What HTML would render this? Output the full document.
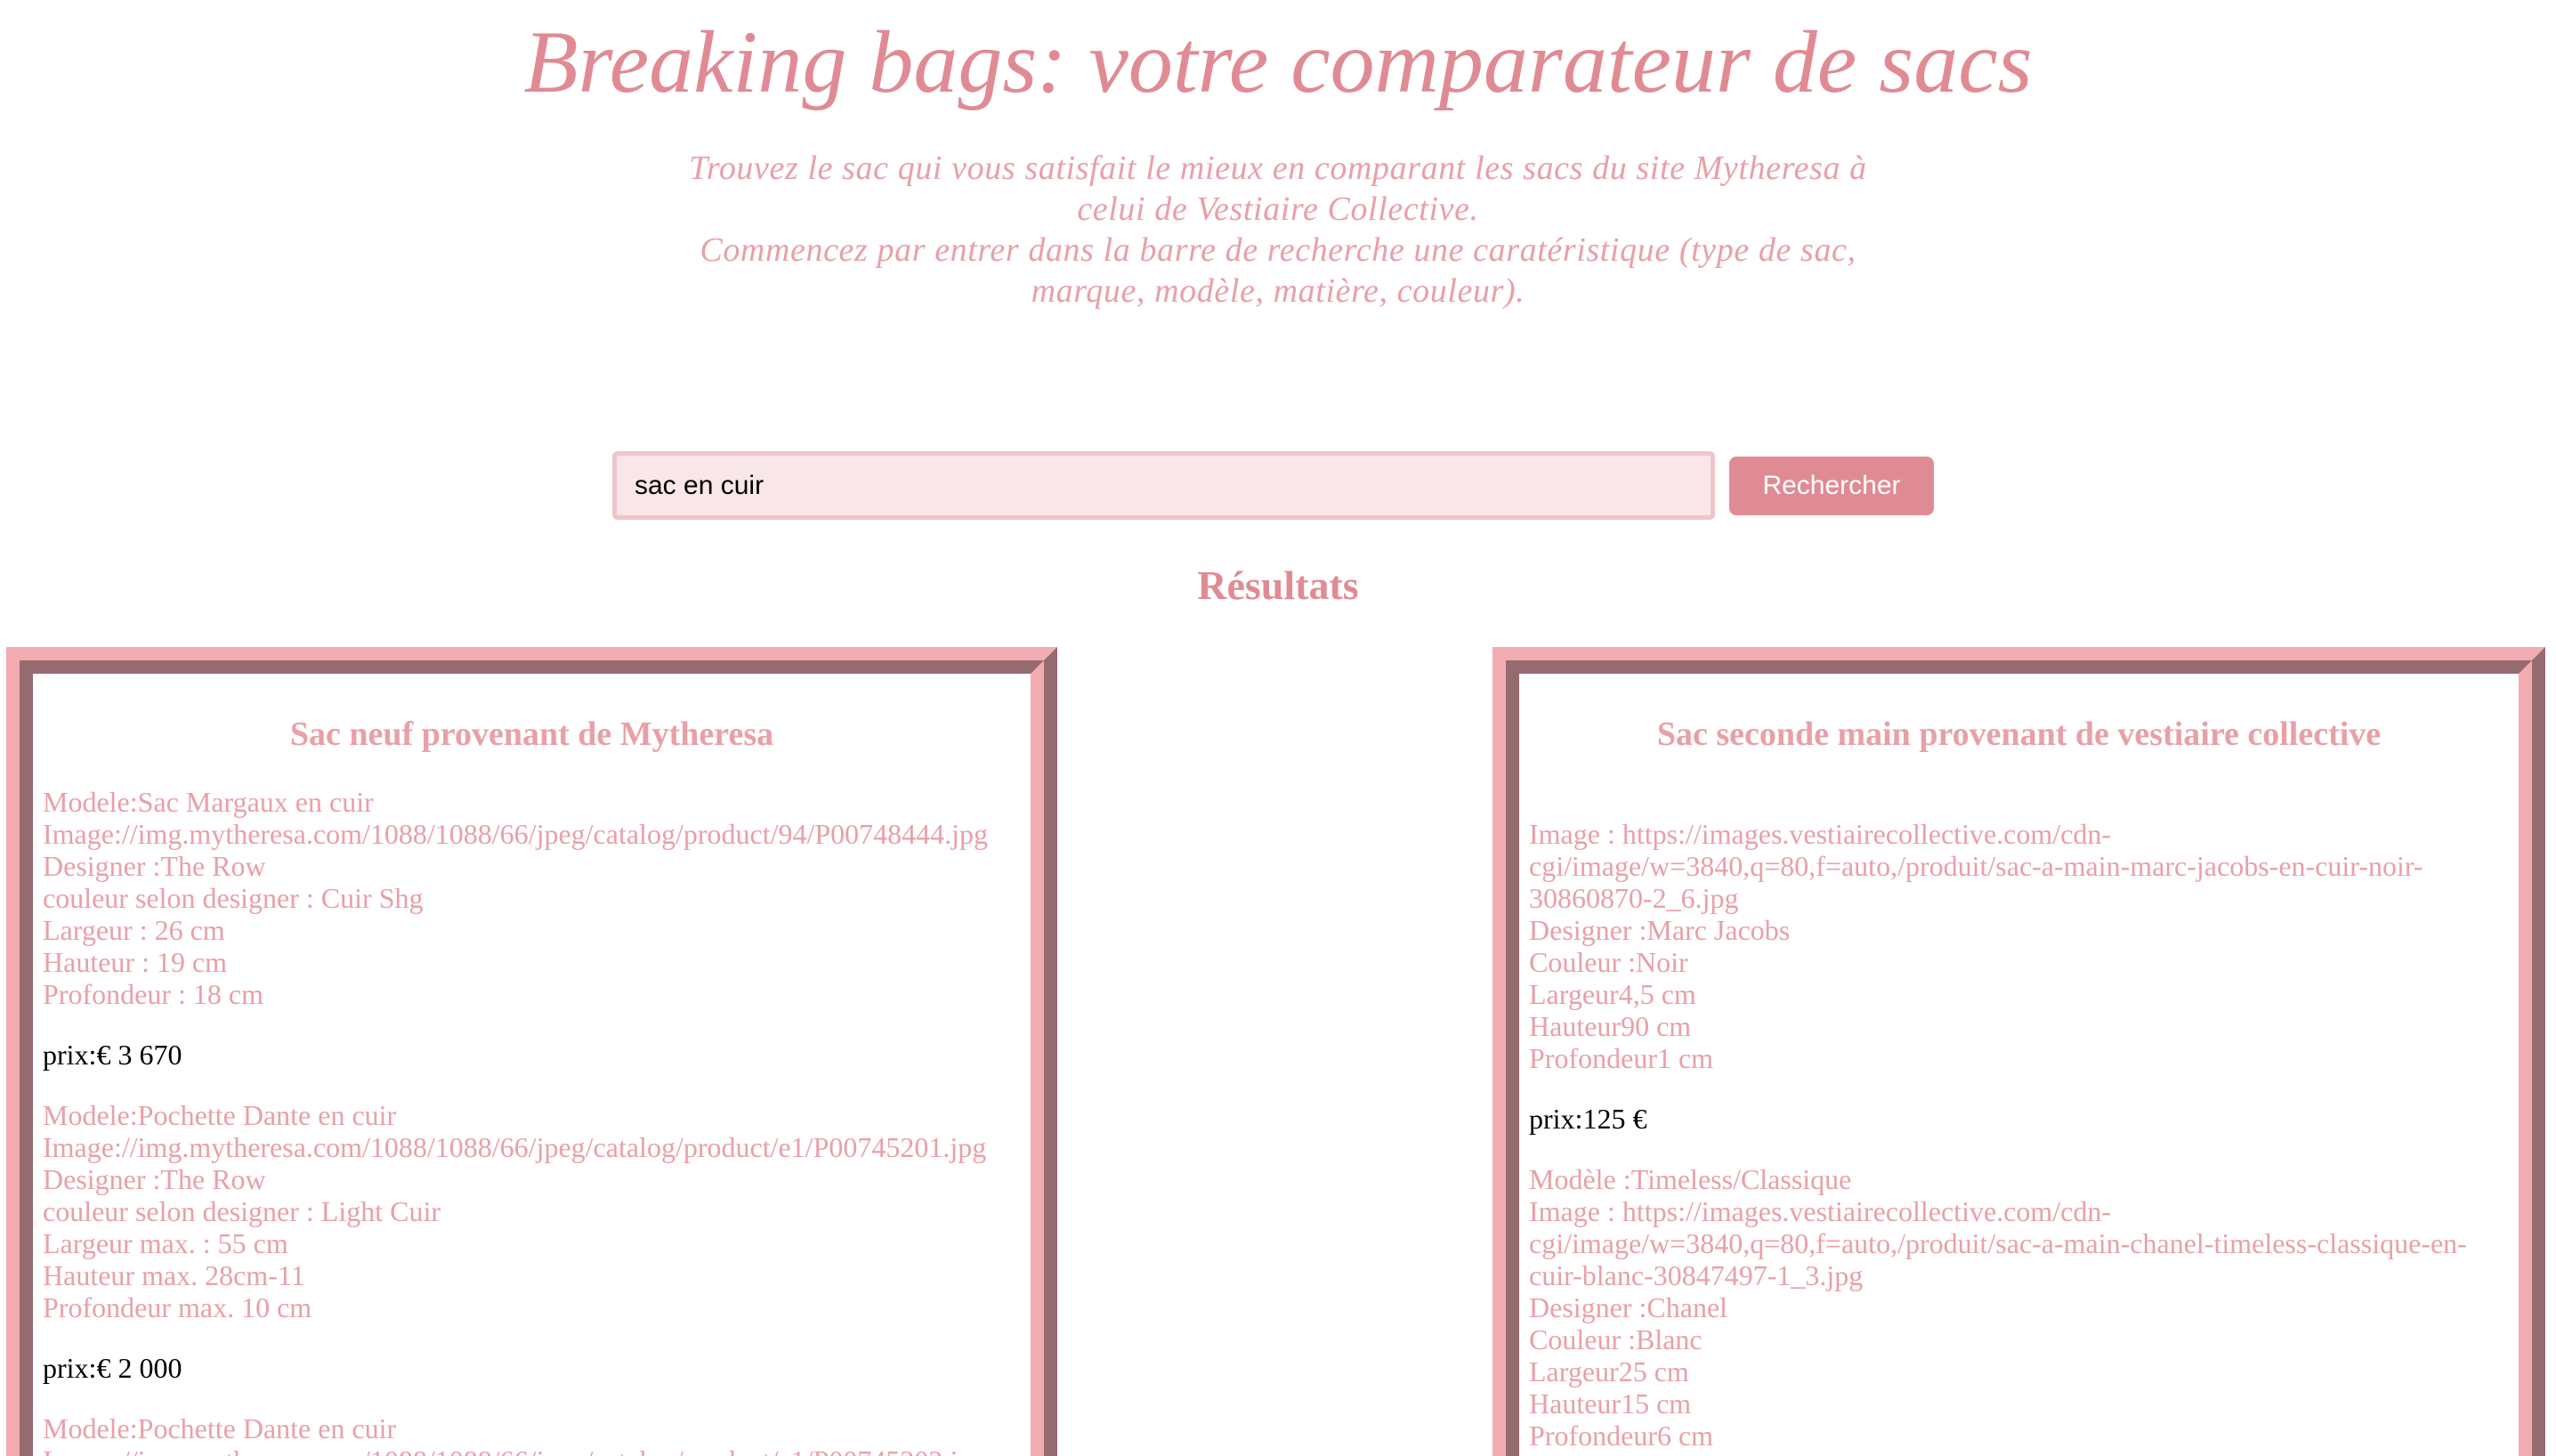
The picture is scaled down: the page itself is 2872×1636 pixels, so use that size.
<!DOCTYPE html>
<html><head><meta charset="utf-8"><style>
html,body{margin:0;padding:0;background:#fff;width:2872px;height:1636px;overflow:hidden;}
body{position:relative;font-family:"Liberation Serif",serif;}
h1{position:absolute;left:0;width:2872px;top:10px;margin:0;text-align:center;font-style:italic;font-weight:normal;font-size:100px;line-height:120px;color:#e08b94;}
.intro{position:absolute;left:0;width:2872px;top:166px;text-align:center;font-style:italic;font-size:38px;line-height:46px;color:#e8a0a7;letter-spacing:0.6px;}
.search{position:absolute;left:688px;top:507px;height:67px;background:#f8e6e8;border:5px solid #efc4c8;border-radius:6px;font-family:"Liberation Sans",sans-serif;font-size:30px;line-height:67px;padding-left:20px;width:1209px;}
.btn{position:absolute;left:1943px;top:513px;width:230px;height:66px;background:#e08b94;border-radius:8px;color:#fff;font-family:"Liberation Sans",sans-serif;font-size:30px;line-height:66px;text-align:center;}
.res{position:absolute;left:0;width:2872px;top:630px;text-align:center;font-weight:bold;font-size:46px;line-height:56px;color:#e08b94;}
.box{position:absolute;top:727px;height:1000px;border:15px solid;border-color:#f2acb1 #956b6f #956b6f #f2acb1;}
.inner{border:15px solid;border-color:#956b6f #f2acb1 #f2acb1 #956b6f;height:100%;box-sizing:border-box;background:#fff;padding:46px 11px 0 11px;}
.box h3{margin:0;text-align:center;font-size:38px;line-height:44px;color:#e8a0a7;font-weight:bold;}
.txt{margin-top:36px;font-size:32px;line-height:36px;color:#e8a0a7;white-space:nowrap;}
.p{color:#000;margin:32px 0;}
</style></head><body>
<h1>Breaking bags: votre comparateur de sacs</h1>
<div class="intro">Trouvez le sac qui vous satisfait le mieux en comparant les sacs du site Mytheresa à<br>celui de Vestiaire Collective.<br>Commencez par entrer dans la barre de recherche une caratéristique (type de sac,<br>marque, modèle, matière, couleur).</div>
<div class="search">sac en cuir</div>
<div class="btn">Rechercher</div>
<div class="res">Résultats</div>

<div class="box" style="left:7px;width:1151px;"><div class="inner">
<h3>Sac neuf provenant de Mytheresa</h3>
<div class="txt">
Modele:Sac Margaux en cuir<br>Image://img.mytheresa.com/1088/1088/66/jpeg/catalog/product/94/P00748444.jpg<br>Designer :The Row<br>couleur selon designer : Cuir Shg<br>Largeur : 26 cm<br>Hauteur : 19 cm<br>Profondeur : 18 cm
<div class="p">prix:€ 3 670</div>
Modele:Pochette Dante en cuir<br>Image://img.mytheresa.com/1088/1088/66/jpeg/catalog/product/e1/P00745201.jpg<br>Designer :The Row<br>couleur selon designer : Light Cuir<br>Largeur max. : 55 cm<br>Hauteur max. 28cm-11<br>Profondeur max. 10 cm
<div class="p">prix:€ 2 000</div>
Modele:Pochette Dante en cuir<br>Image://img.mytheresa.com/1088/1088/66/jpeg/catalog/product/e1/P00745202.jpg
</div></div></div>

<div class="box" style="left:1677px;width:1153px;"><div class="inner">
<h3>Sac seconde main provenant de vestiaire collective</h3>
<div class="txt">
&nbsp;<br>Image : https://images.vestiairecollective.com/cdn-<br>cgi/image/w=3840,q=80,f=auto,/produit/sac-a-main-marc-jacobs-en-cuir-noir-<br>30860870-2_6.jpg<br>Designer :Marc Jacobs<br>Couleur :Noir<br>Largeur4,5 cm<br>Hauteur90 cm<br>Profondeur1 cm
<div class="p">prix:125 €</div>
Modèle :Timeless/Classique<br>Image : https://images.vestiairecollective.com/cdn-<br>cgi/image/w=3840,q=80,f=auto,/produit/sac-a-main-chanel-timeless-classique-en-<br>cuir-blanc-30847497-1_3.jpg<br>Designer :Chanel<br>Couleur :Blanc<br>Largeur25 cm<br>Hauteur15 cm<br>Profondeur6 cm
</div></div></div>
</body></html>
